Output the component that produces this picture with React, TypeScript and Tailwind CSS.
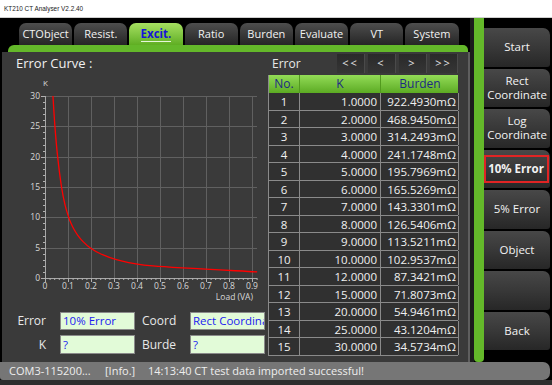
import React from "react";

const tabs = ["CTObject", "Resist.", "Excit.", "Ratio", "Burden", "Evaluate", "VT", "System"];

const rows: [number, string, string][] = [
  [1, "1.0000", "922.4930"],
  [2, "2.0000", "468.9450"],
  [3, "3.0000", "314.2493"],
  [4, "4.0000", "241.1748"],
  [5, "5.0000", "195.7969"],
  [6, "6.0000", "165.5269"],
  [7, "7.0000", "143.3301"],
  [8, "8.0000", "126.5406"],
  [9, "9.0000", "113.5211"],
  [10, "10.0000", "102.9537"],
  [11, "12.0000", "87.3421"],
  [12, "15.0000", "71.8073"],
  [13, "20.0000", "54.9461"],
  [14, "25.0000", "43.1204"],
  [15, "30.0000", "34.5734"],
];

const buttons = ["Start", "Rect\nCoordinate", "Log\nCoordinate", "10% Error", "5% Error", "Object", "", "Back"];

const ox = 35;
const oy = 203;
const sx = 230;
const sy = 182 / 30;

function smoothPath(pts: [number, number][]) {
  let d = `M${pts[0][0].toFixed(2)},${pts[0][1].toFixed(2)}`;
  for (let i = 0; i < pts.length - 1; i++) {
    const p0 = pts[i - 1] || pts[i];
    const p1 = pts[i];
    const p2 = pts[i + 1];
    const p3 = pts[i + 2] || p2;
    const c1x = p1[0] + (p2[0] - p0[0]) / 6;
    const c1y = p1[1] + (p2[1] - p0[1]) / 6;
    const c2x = p2[0] - (p3[0] - p1[0]) / 6;
    const c2y = p2[1] - (p3[1] - p1[1]) / 6;
    d += ` C${c1x.toFixed(2)},${c1y.toFixed(2)} ${c2x.toFixed(2)},${c2y.toFixed(2)} ${p2[0].toFixed(2)},${p2[1].toFixed(2)}`;
  }
  return d;
}

function Chart() {
  const pts: [number, number][] = rows
    .map((r) => [parseFloat(r[2]) / 1000, parseFloat(r[1])] as [number, number])
    .sort((a, b) => a[0] - b[0])
    .map(([b, k]) => [ox + b * sx, oy - k * sy] as [number, number]);
  const vgrid = [1, 2, 3, 4, 5, 6, 7, 8, 9];
  const hgrid = [5, 10, 15, 20, 25, 30];
  const xMinor: number[] = [];
  for (let i = 0; i <= 46; i++) xMinor.push(i);
  const yMinor: number[] = [];
  for (let i = 0; i <= 30; i++) yMinor.push(i);
  return (
    <svg width="258" height="230" className="ml-[8px] shrink-0 block">
      {vgrid.map((i) => (
        <line key={"v" + i} x1={ox + i * 23 + 0.5} x2={ox + i * 23 + 0.5} y1={oy - 182} y2={oy} stroke="#606060" strokeWidth="1" />
      ))}
      {hgrid.map((k) => (
        <line key={"h" + k} x1={ox} x2={247} y1={Math.round(oy - k * sy) + 0.5} y2={Math.round(oy - k * sy) + 0.5} stroke="#606060" strokeWidth="1" />
      ))}
      <line x1={ox + 0.5} x2={ox + 0.5} y1={oy - 182} y2={oy + 1} stroke="#a8a8a8" strokeWidth="1" />
      <line x1={ox} x2={247} y1={oy + 0.5} y2={oy + 0.5} stroke="#a8a8a8" strokeWidth="1" />
      {xMinor.map((i) => (
        <line key={"xm" + i} x1={ox + i * 4.6 + 0.5} x2={ox + i * 4.6 + 0.5} y1={oy} y2={oy + (i % 5 === 0 ? 4 : 2)} stroke="#b0b0b0" strokeWidth="1" />
      ))}
      {yMinor.map((i) => (
        <line key={"ym" + i} x1={ox - (i % 5 === 0 ? 4 : 2)} x2={ox} y1={Math.round(oy - i * sy) + 0.5} y2={Math.round(oy - i * sy) + 0.5} stroke="#b0b0b0" strokeWidth="1" />
      ))}
      {[0, 5, 10, 15, 20, 25, 30].map((k) => (
        <text key={"yl" + k} x={30} y={oy - k * sy + 3} textAnchor="end" fontSize="8.5" fill="#d8d8d8" fontFamily="Open Sans, sans-serif">
          {k}
        </text>
      ))}
      {[0, 1, 2, 3, 4, 5, 6, 7, 8, 9].map((i) => (
        <text key={"xl" + i} x={ox + i * 23} y={oy + 11} textAnchor="middle" fontSize="8.5" fill="#d8d8d8" fontFamily="Open Sans, sans-serif">
          {i === 0 ? "0" : `0.${i}`}
        </text>
      ))}
      <text x={33} y={11} fontSize="8" fill="#d8d8d8" fontFamily="Open Sans, sans-serif">K</text>
      <text x={243} y={225} textAnchor="end" fontSize="8.5" fill="#d8d8d8" fontFamily="Open Sans, sans-serif">Load (VA)</text>
      <path d={smoothPath(pts)} fill="none" stroke="#ff0000" strokeWidth="1.3" />
    </svg>
  );
}

function Field({ text }: { text: string }) {
  return (
    <div className="w-[75px] h-full bg-[#e2fbd8] border border-[#8a8a8a] text-[#1c1cf0] text-[11.5px] pl-[2px] overflow-hidden whitespace-nowrap flex items-center">
      {text}
    </div>
  );
}

export default function App() {
  return (
    <div className="w-[552px] h-[385px] bg-black flex flex-col overflow-hidden font-['Open_Sans',sans-serif] text-[#f0f0f0]">
      <div className="h-[18px] shrink-0 bg-white border-b border-[#cfcfcf] flex items-center pl-[4px] text-[6.4px] text-[#1a1a1a] font-['Liberation_Sans',sans-serif]">
        KT210 CT Analyser V2.2.40
      </div>
      <div className="flex h-[344px] shrink-0">
        <div className="w-[470px] flex flex-col">
          <div className="h-[27px] pt-[5px] pl-[19px] flex gap-[2px] shrink-0">
            {tabs.map((t) =>
              t === "Excit." ? (
                <div key={t} className="w-[53.2px] h-[22px] rounded-t-[7px] bg-gradient-to-b from-[#a6e060] to-[#5fae22] flex items-center justify-center">
                  <span className="text-[11.5px] font-bold text-[#1515d8] border-b border-[#e6f6da] leading-[14px]">{t}</span>
                </div>
              ) : (
                <div key={t} className="w-[53.2px] h-[22px] rounded-t-[7px] bg-gradient-to-b from-[#4e4e4e] to-[#262626] flex items-center justify-center text-[11px] font-medium text-[#f2f2f2]">
                  {t}
                </div>
              )
            )}
          </div>
          <div className="h-[7px] ml-[8px] mr-[2px] bg-[#64b82a] rounded-tl-[6px] rounded-tr-[5px] shrink-0" />
          <div className="h-[310px] ml-[2px] bg-[#3a3a3a] border-r-2 border-[#5e5e5e] flex">
            <div className="w-[266px] flex flex-col">
              <div className="h-[23px] flex items-center pl-[14px] text-[13px]">Error Curve :</div>
              <Chart />
              <div className="mt-[7px] flex flex-col gap-[5px] text-[12px] text-[#e8e8e8]">
                <div className="flex items-center h-[18px]">
                  <div className="w-[44px] text-right">Error</div>
                  <div className="ml-[14px] h-full"><Field text="10% Error" /></div>
                  <div className="ml-[7px] w-[48px]">Coord</div>
                  <div className="h-full"><Field text="Rect Coordina" /></div>
                </div>
                <div className="flex items-center h-[19px]">
                  <div className="w-[44px] text-right">K</div>
                  <div className="ml-[14px] h-full"><Field text="?" /></div>
                  <div className="ml-[7px] w-[48px]">Burde</div>
                  <div className="h-full"><Field text="?" /></div>
                </div>
              </div>
            </div>
            <div className="w-[200px] flex flex-col">
              <div className="h-[23px] flex items-center">
                <div className="w-[69px] pl-[4px] text-[12px] text-[#e8e8e8]">Error</div>
                <div className="flex gap-[3px]">
                  {["<<", "<", ">", ">>"].map((b) => (
                    <div key={b} className="w-[28px] h-[19px] bg-gradient-to-b from-[#2a2a2a] to-[#353535] border-r border-[#4a4a4a] flex items-center justify-center text-[11px] tracking-[2px] text-[#e6e6e6]">
                      {b}
                    </div>
                  ))}
                </div>
              </div>
              <div className="w-[190px] border-l border-[#8a8a8a] flex flex-col">
                <div className="grid grid-cols-[31px_81px_78px] h-[18px] bg-gradient-to-b from-[#93dc56] to-[#5cab22] text-[12px] text-[#1c2a82]">
                  <div className="flex items-center justify-center border-r border-[#529a1e]">No.</div>
                  <div className="flex items-center justify-center border-r border-[#529a1e]">K</div>
                  <div className="flex items-center justify-center">Burden</div>
                </div>
                {rows.map((r) => (
                  <div key={r[0]} className="grid grid-cols-[31px_81px_78px] h-[17.5px] bg-[#303030] border-b border-[#8a8a8a] text-[11.5px] text-[#f0f0f0]">
                    <div className="flex items-center justify-center border-r border-[#8a8a8a]">{r[0]}</div>
                    <div className="flex items-center justify-end pr-[3px] border-r border-[#8a8a8a]">{r[1]}</div>
                    <div className="flex items-center justify-end pr-[2px] border-r border-[#8a8a8a]">{r[2]}mΩ</div>
                  </div>
                ))}
              </div>
            </div>
          </div>
        </div>
        <div className="w-[4px] bg-[#1c1c1c]" />
        <div className="w-[10px] h-[344px] bg-[#64b82a] rounded-b-[4px]" />
        <div className="w-[66px] flex flex-col pt-[10px] gap-[2px]">
          {buttons.map((b, i) => (
            <div key={i} className="h-[38.5px] rounded-tr-[7px] rounded-br-[3px] bg-gradient-to-b from-[#484848] via-[#383838] to-[#272727] flex items-center justify-center text-center text-[11.5px] font-medium text-[#f2f2f2] leading-[14px] whitespace-pre-line">
              {b === "10% Error" ? (
                <div className="w-[65px] h-[28px] -ml-[2px] border-2 border-[#e02424] flex items-center justify-center font-bold">10% Error</div>
              ) : (
                b
              )}
            </div>
          ))}
        </div>
      </div>
      <div className="h-[18px] w-[550px] shrink-0 bg-[#767676] rounded-r-[7px] rounded-bl-[3px] flex items-center text-[11px] text-[#eeeeee] whitespace-nowrap">
        <span className="w-[105px] pl-[9px]">COM3-115200...</span>
        <span className="w-[43px]">[Info.]</span>
        <span>14:13:40 CT test data imported successful!</span>
      </div>
      <div className="h-[5px] shrink-0 bg-[#2e2e2e]" />
    </div>
  );
}
